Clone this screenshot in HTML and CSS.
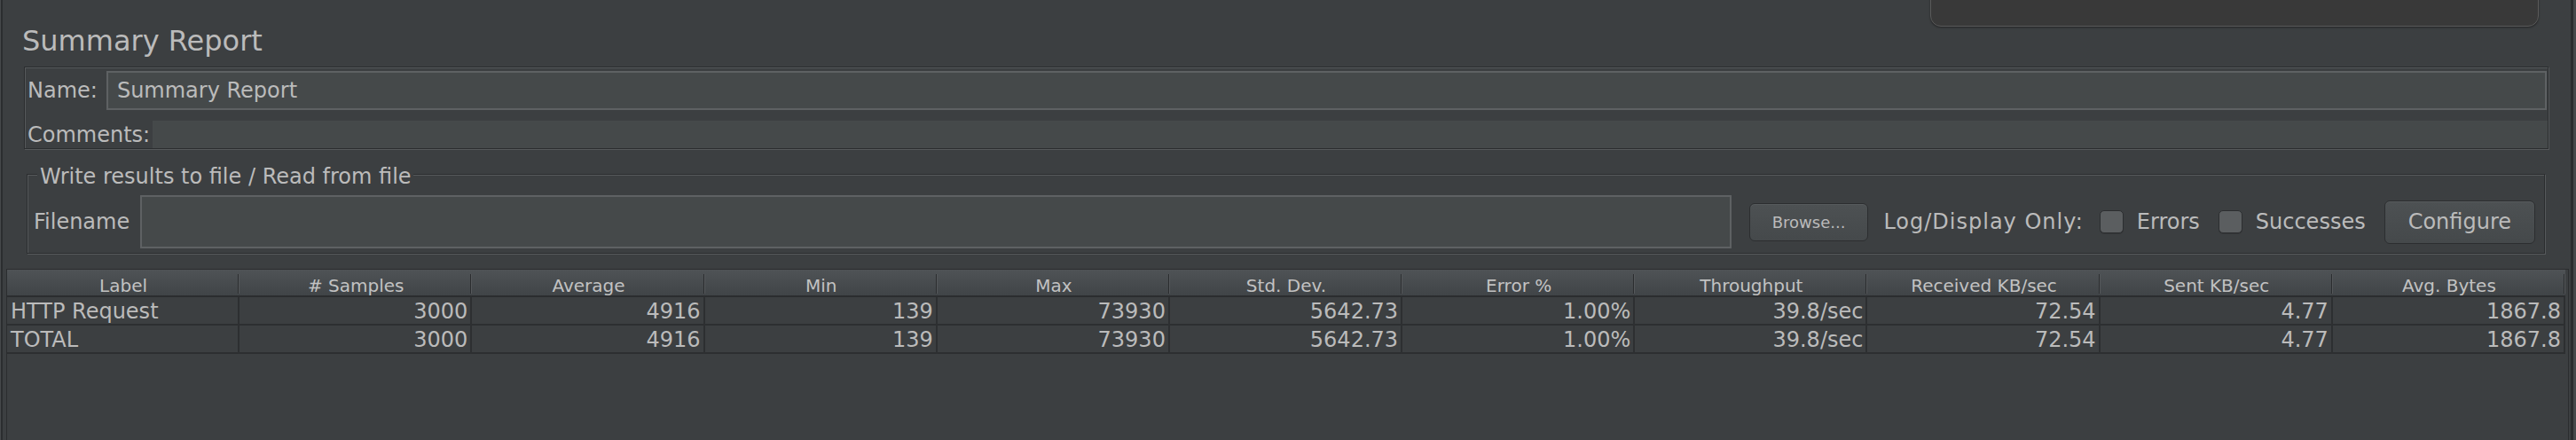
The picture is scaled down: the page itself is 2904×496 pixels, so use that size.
FILE: index.html
```html
<!DOCTYPE html>
<html>
<head>
<meta charset="utf-8">
<title>Summary Report</title>
<link rel="stylesheet" href="styles.css">
</head>
<body>
<div class="window">
  <div class="popup"></div>
  <h1 class="title">Summary Report</h1>
  <div class="name-panel">
    <div class="name-row">
      <span class="lbl name-lbl">Name:</span>
      <div class="field name-field">Summary Report</div>
    </div>
    <div class="comments-row">
      <span class="lbl comments-lbl">Comments:</span>
      <div class="comments-field"></div>
    </div>
  </div>
  <fieldset class="file-panel">
    <legend>Write results to file / Read from file</legend>
    <div class="file-row">
      <span class="lbl file-lbl">Filename</span>
      <div class="field file-field"></div>
      <button class="btn btn-browse">Browse...</button>
      <span class="lbl log-lbl">Log/Display Only:</span>
      <span class="check check-errors"><span class="box"></span>Errors</span>
      <span class="check check-success"><span class="box"></span>Successes</span>
      <button class="btn btn-configure">Configure</button>
    </div>
  </fieldset>
  <div class="table-pane">
    <div class="grid">
      <div class="th">Label</div>
      <div class="th"># Samples</div>
      <div class="th">Average</div>
      <div class="th">Min</div>
      <div class="th">Max</div>
      <div class="th">Std. Dev.</div>
      <div class="th">Error %</div>
      <div class="th">Throughput</div>
      <div class="th">Received KB/sec</div>
      <div class="th">Sent KB/sec</div>
      <div class="th">Avg. Bytes</div>

      <div class="td td-left">HTTP Request</div>
      <div class="td">3000</div>
      <div class="td">4916</div>
      <div class="td">139</div>
      <div class="td">73930</div>
      <div class="td">5642.73</div>
      <div class="td">1.00%</div>
      <div class="td">39.8/sec</div>
      <div class="td">72.54</div>
      <div class="td">4.77</div>
      <div class="td">1867.8</div>

      <div class="td td-left">TOTAL</div>
      <div class="td">3000</div>
      <div class="td">4916</div>
      <div class="td">139</div>
      <div class="td">73930</div>
      <div class="td">5642.73</div>
      <div class="td">1.00%</div>
      <div class="td">39.8/sec</div>
      <div class="td">72.54</div>
      <div class="td">4.77</div>
      <div class="td">1867.8</div>
    </div>
  </div>
</div>
</body>
</html>
```

FILE: styles.css
```css
* { box-sizing: border-box; }
html, body { margin: 0; padding: 0; }
body {
  background: #46494b;
  width: 2904px;
  height: 496px;
  overflow: hidden;
  font-family: "DejaVu Sans", "Noto Sans", sans-serif;
  color: #bbbbbb;
}
.window {
  position: relative;
  height: 496px;
  margin: 0 3px 0 1px;
  border-left: 2px solid #2b2d2f;
  border-right: 3px solid #2b2d2f;
  background: #3c3f41;
  display: flex;
  flex-direction: column;
  overflow: hidden;
}
.popup {
  position: absolute;
  left: 2173px;
  top: -20px;
  width: 686px;
  height: 50px;
  border-radius: 12px;
  background: #393939;
  border: 1px solid #5a5a5a;
  box-shadow: 0 1px 2px #242526;
}
.title {
  margin: 26px 0 0 22px;
  font-size: 32px;
  line-height: 40px;
  height: 40px;
  font-weight: normal;
  color: #bbbbbb;
}
.lbl {
  font-size: 24px;
  line-height: 28px;
  white-space: nowrap;
}
.field {
  background: #45494a;
  border: 2px solid #5e6163;
}
.name-panel {
  margin: 9px 25px 0 24px;
  border: 1px solid #2b2d2f;
  box-shadow: inset 1px 1px 0 #56595b, 1px 1px 0 #56595b;
  padding: 4px 1px 0 3px;
}
.name-row {
  display: flex;
  align-items: center;
  height: 44px;
}
.name-lbl { margin-right: 10px; }
.name-field {
  flex: 1;
  height: 44px;
  font-size: 24px;
  line-height: 40px;
  padding-left: 10px;
  white-space: nowrap;
}
.comments-row {
  display: flex;
  align-items: center;
  height: 31px;
  margin-top: 12px;
}
.comments-lbl { margin-right: 3px; }
.comments-field {
  flex: 1;
  align-self: stretch;
  background: #45494a;
  margin-right: -1px;
}
.file-panel {
  margin: 11px 29px 0 27px;
  border: 1px solid #2b2d2f;
  box-shadow: inset 1px 1px 0 #56595b, 1px 1px 0 #56595b;
  padding: 7px 10px 5px 7px;
  min-width: 0;
}
.file-panel legend {
  font-size: 24px;
  line-height: 28px;
  padding: 6px 2px 0 3px;
  margin-left: 4px;
  background: #3c3f41;
  white-space: nowrap;
}
.file-row {
  display: flex;
  align-items: center;
  height: 60px;
}
.file-lbl { margin-right: 12px; }
.file-field {
  flex: 1;
  height: 60px;
  margin-right: 20px;
}
.btn {
  font-family: "DejaVu Sans", "Noto Sans", sans-serif;
  color: #bbbbbb;
  background: linear-gradient(#4d5153, #45494b);
  border: 1px solid #2c2e30;
  border-radius: 6px;
  box-shadow: inset 0 1px 0 #575b5d;
  white-space: nowrap;
}
.btn-browse {
  height: 43px;
  font-size: 18px;
  padding: 0 25px;
  margin-right: 17px;
}
.log-lbl {
  margin-right: 18px;
  letter-spacing: 1px;
}
.check {
  display: flex;
  align-items: center;
  font-size: 24px;
  line-height: 28px;
  white-space: nowrap;
  margin-right: 21px;
}
.box {
  width: 27px;
  height: 26px;
  border-radius: 5px;
  background: #5b5e60;
  border: 1px solid #2c2e30;
  box-shadow: 0 1px 0 #333537;
  margin-right: 15px;
}
.btn-configure {
  height: 49px;
  font-size: 24px;
  padding: 0 26px;
}
.table-pane {
  flex: 1;
  margin: 17px 2px 0 4px;
  border-left: 1px solid #2b2d2f;
  border-top: 1px solid #2b2d2f;
  border-right: 1px solid #2b2d2f;
  padding-right: 3px;
}
.grid {
  display: grid;
  grid-template-columns: repeat(11, 1fr);
}
.th {
  position: relative;
  height: 31px;
  border-bottom: 2px solid #2b2d2f;
  background: linear-gradient(#4f5356, #404447);
  font-size: 20px;
  line-height: 21px;
  padding-top: 8px;
  text-align: center;
  white-space: nowrap;
  color: #c2c2c2;
}
.th::after {
  content: "";
  position: absolute;
  right: 0;
  top: 5px;
  bottom: 2px;
  width: 2px;
  background: linear-gradient(to right, #2b2d2f 50%, #55585b 50%);
}
.td {
  height: 32px;
  border-right: 2px solid #2d2f31;
  border-bottom: 2px solid #2d2f31;
  font-size: 24px;
  line-height: 28px;
  padding: 2px 3px 0 4px;
  text-align: right;
  white-space: nowrap;
  overflow: hidden;
}
.td-left { text-align: left; }
```
